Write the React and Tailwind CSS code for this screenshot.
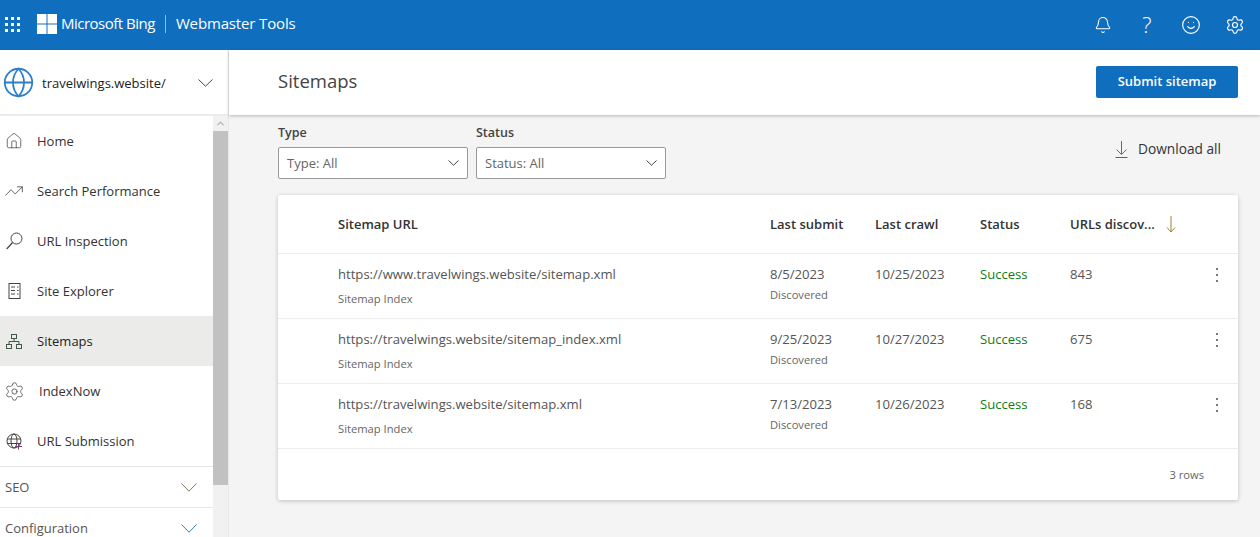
import React from "react";
import { ChevronUp, House, Globe, Bell, Smile, Settings, TrendingUp } from "lucide-react";

const font = { fontFamily: '"Open Sans", sans-serif' };

const rows = [
  { url: "https://www.travelwings.website/sitemap.xml", date: "8/5/2023", crawl: "10/25/2023", count: "843" },
  { url: "https://travelwings.website/sitemap_index.xml", date: "9/25/2023", crawl: "10/27/2023", count: "675" },
  { url: "https://travelwings.website/sitemap.xml", date: "7/13/2023", crawl: "10/26/2023", count: "168" },
];

const Waffle = () => (
  <svg width="16" height="16" viewBox="0 0 16 16" fill="white">
    {[0, 6, 12].map(y => [0, 6, 12].map(x => <rect key={`${x}-${y}`} x={x} y={y} width="3" height="3" />))}
  </svg>
);

const WinLogo = () => (
  <svg width="20" height="20" viewBox="0 0 20 20" fill="white">
    <rect width="9.500" height="9.500" />
    <rect x="10.500" width="9.500" height="9.500" />
    <rect y="10.500" width="9.500" height="9.500" />
    <rect x="10.500" y="10.500" width="9.500" height="9.500" />
  </svg>
);

const Chev = ({ w = 16, h = 9, color = "#444" }) => (
  <svg width={w} height={h} viewBox={`0 0 ${w} ${h}`} fill="none" stroke={color} strokeWidth="1">
    <path d={`M0.500 0.500L${w / 2} ${h - 0.8}L${w - 0.5} 0.500`} />
  </svg>
);

const SearchIcon = () => (
  <svg width="17" height="18" viewBox="0 0 17 18" fill="none" stroke="#444" strokeWidth="1">
    <circle cx="10.500" cy="6.500" r="5.500" />
    <path d="M6.500 10.500L0.700 17" strokeWidth="1.200" />
  </svg>
);

const ExplorerIcon = () => (
  <svg width="13" height="16" viewBox="0 0 13 16" fill="none" stroke="#444" strokeWidth="1">
    <rect x="1" y="0.500" width="11" height="15" />
    <path d="M3 4h4M9 4h1.500M3 7.500h4M9 7.500h1.500M3 11h4M9 11h1.500" />
  </svg>
);

const SitemapIcon = () => (
  <svg width="16" height="15" viewBox="0 0 16 15" fill="none" stroke="#3f5a4a" strokeWidth="1">
    <rect x="5.500" y="0.500" width="5" height="4" />
    <rect x="0.500" y="10.500" width="5" height="4" />
    <rect x="10.500" y="10.500" width="5" height="4" />
    <path d="M8 4.500v3M3 10.500v-3h10v3" />
  </svg>
);

const IndexNowIcon = () => (
  <span className="relative flex w-[18px] h-[18px] items-center justify-center">
    <Settings size={21} strokeWidth={1} className="shrink-0 text-[#555]" />
  </span>
);

const UrlSubmitIcon = () => (
  <svg width="17" height="17" viewBox="0 0 17 17" fill="none" stroke="#444" strokeWidth="1">
    <circle cx="8" cy="8" r="7" />
    <ellipse cx="8" cy="8" rx="3" ry="7" />
    <path d="M1 6h14M1 10.500h14" />
    <path d="M9 13.500h7M12.500 10v6.500" stroke="#7a3e7a" />
  </svg>
);

const Download = () => (
  <svg width="13" height="17" viewBox="0 0 13 17" fill="none" strokeWidth="1">
    <path d="M6.500 0v13M1.500 8.500l5 5 5-5" stroke="#7a5a96" />
    <path d="M0.500 16.500h12" stroke="#2a6fb5" />
  </svg>
);

const SortArrow = () => (
  <svg width="10" height="17" viewBox="0 0 10 17" fill="none" stroke="#a5812f" strokeWidth="1">
    <path d="M5 0v16M1 11.500l4 4.500 4-4.500" />
  </svg>
);

const Dots = () => (
  <svg width="2" height="14" viewBox="0 0 2 14" fill="#777">
    <rect width="2" height="2" />
    <rect y="6" width="2" height="2" />
    <rect y="12" width="2" height="2" />
  </svg>
);

const nav = [
  { label: "Home", icon: <House size={18} strokeWidth={1} /> },
  { label: "Search Performance", icon: <TrendingUp size={20} strokeWidth={1} className="shrink-0" /> },
  { label: "URL Inspection", icon: <SearchIcon /> },
  { label: "Site Explorer", icon: <ExplorerIcon /> },
  { label: "Sitemaps", icon: <SitemapIcon />, active: true },
  { label: "IndexNow", icon: <IndexNowIcon />, shift: true },
  { label: "URL Submission", icon: <UrlSubmitIcon /> },
];

const Sidebar = () => (
  <aside className="w-[229px] shrink-0 bg-white border-r border-[#e8e8e8] flex flex-col overflow-hidden">
    <div className="h-[66px] shrink-0 flex items-center border-b-2 border-[#ececec] pl-[2px]">
      <Globe size={33} strokeWidth={1.3} className="text-[#2f7fc8]" />
      <span className="ml-[7px] text-[13px] text-[#222] pt-[3px]">travelwings.website/</span>
      <span className="ml-auto mr-[15px] pt-px"><Chev w={15} h={8} /></span>
    </div>
    <div className="flex flex-1 min-h-0">
      <div className="w-[213px] shrink-0">
        {nav.map(n => (
          <div key={n.label} className={`h-[50px] flex items-center pl-[5px] text-[13px] ${n.active ? "bg-[#ebebe9] text-[#222]" : "text-[#333]"}`}>
            <span className="w-[18px] flex justify-center text-[#444]">{n.icon}</span>
            <span className={`pt-[2px] ${n.shift ? "ml-[16px]" : "ml-[14px]"}`}>{n.label}</span>
          </div>
        ))}
        <div className="h-[41px] flex items-center justify-between px-[5px] border-t border-[#e6e6e6] text-[13px] text-[#555]">
          <span className="pt-[2px]">SEO</span>
          <span className="mr-[11px]"><Chev color="#85795a" /></span>
        </div>
        <div className="h-[41px] flex items-center justify-between px-[5px] border-t border-[#e6e6e6] text-[13px] text-[#555]">
          <span className="pt-[2px]">Configuration</span>
          <span className="mr-[11px]"><Chev color="#2f7fc8" /></span>
        </div>
      </div>
      <div className="w-[15px] shrink-0 bg-[#f1f1f1] flex flex-col">
        <div className="h-[15px] flex items-center justify-center">
          <ChevronUp size={11} strokeWidth={3} className="text-[#b5b5b5]" />
        </div>
        <div className="h-[354px] bg-[#c1c1c1]" />
      </div>
    </div>
  </aside>
);

const Select = ({ label, value }) => (
  <div className="w-[190px]">
    <div className="text-[12.500px] font-semibold text-[#444] leading-[17px] mb-[6px]">{label}</div>
    <div className="h-[32px] bg-white border border-[#999] rounded-[2px] flex items-center justify-between pl-2 pr-[8px] text-[13px] text-[#666]">
      <span className="pt-[2px]">{value}</span>
      <Chev w={11} h={6} />
    </div>
  </div>
);

const cols = "grid grid-cols-[60px_432px_105px_105px_90px_1fr]";

const App = () => (
  <div style={font} className="w-[1260px] h-[537px] overflow-hidden flex flex-col bg-[#f4f4f4]">
    <header className="h-[50px] shrink-0 bg-[#106ebe] text-white flex items-center">
      <span className="ml-[5px] -mt-px"><Waffle /></span>
      <span className="ml-4 -mt-[3px]"><WinLogo /></span>
      <span className="ml-[4px] -mt-[3px] text-[15px] tracking-[-0.5px]">Microsoft Bing</span>
      <span className="mx-[10px] -mt-[2px] w-px h-[18px] bg-[#8fbde4]" />
      <span className="-mt-[3px] text-[15px] tracking-[-0.15px]">Webmaster Tools</span>
      <div className="ml-auto flex items-center mr-[3px]">
        <span className="w-[44px] flex justify-center -mt-px"><Bell size={18} strokeWidth={1.4} /></span>
        <span className="w-[44px] text-center text-[22px] leading-none font-light -mt-[2px]">?</span>
        <span className="w-[44px] flex justify-center -mt-px"><Smile size={20} strokeWidth={1.4} /></span>
        <span className="w-[44px] flex justify-center -mt-px"><Settings size={20} strokeWidth={1.4} /></span>
      </div>
    </header>
    <div className="flex flex-1 min-h-0">
      <Sidebar />
      <main className="flex-1 min-w-0 flex flex-col">
        <div className="h-[65px] shrink-0 bg-white shadow-[0_1px_3px_rgba(0,0,0,0.25)] flex items-center justify-between pb-px pl-[49px] pr-[22px]">
          <h1 className="text-[18.500px] text-[#444] -mt-[2px]">Sitemaps</h1>
          <button className="w-[142px] h-[32px] bg-[#106ebe] rounded-[2px] text-white text-[13px] font-semibold">Submit sitemap</button>
        </div>
        <div className="pl-[49px] pr-[22px]">
          <div className="flex items-start mt-[9px] gap-2">
            <Select label="Type" value="Type: All" />
            <Select label="Status" value="Status: All" />
            <div className="ml-auto mt-[15px] mr-[17px] flex items-center text-[13.700px] text-[#333]">
              <span className="mr-[10px]"><Download /></span>
              Download all
            </div>
          </div>
          <section className="mt-[16px] bg-white rounded-[2px] shadow-[0_1px_4px_rgba(0,0,0,0.22)]">
            <div className={`${cols} h-[59px] items-center border-b border-[#ececec] text-[13px] font-semibold text-[#333]`}>
              <span />
              <span className="pt-px">Sitemap URL</span>
              <span className="pt-px">Last submit</span>
              <span className="pt-px">Last crawl</span>
              <span className="pt-px">Status</span>
              <span className="flex items-center pt-px whitespace-nowrap">
                URLs discov...
                <span className="ml-[11px]"><SortArrow /></span>
              </span>
            </div>
            {rows.map(r => (
              <div key={r.url} className={`${cols} h-[65px] border-b border-[#ececec] pt-[10px] text-[13.100px] leading-[20px] text-[#555]`}>
                <span />
                <div>
                  <div>{r.url}</div>
                  <div className="text-[11.200px] text-[#666] mt-[7px] leading-[15px]">Sitemap Index</div>
                </div>
                <div>
                  <div>{r.date}</div>
                  <div className="text-[11.200px] text-[#666] mt-[3px] leading-[15px]">Discovered</div>
                </div>
                <div>{r.crawl}</div>
                <div className="text-[#107c10]">Success</div>
                <div className="flex justify-between pr-[20px]">
                  <span>{r.count}</span>
                  <span className="pt-[4px]"><Dots /></span>
                </div>
              </div>
            ))}
            <div className="h-[51px] flex items-center justify-end pr-[34px] text-[11.200px] text-[#666]">
              <span className="pt-[2px]">3 rows</span>
            </div>
          </section>
        </div>
      </main>
    </div>
  </div>
);

export default App;
